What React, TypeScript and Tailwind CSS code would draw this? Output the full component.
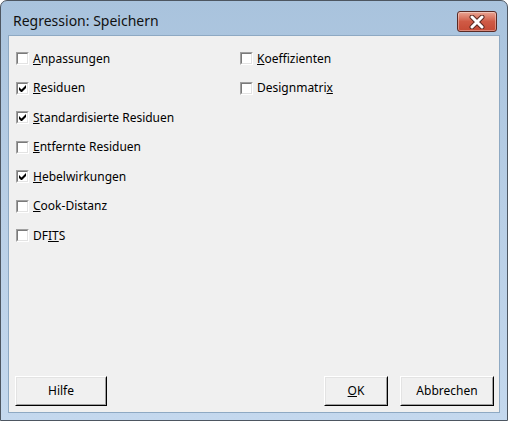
import React from "react";

type Option = { label: React.ReactNode; checked: boolean };

const left: Option[] = [
  { label: <><u>A</u>npassungen</>, checked: false },
  { label: <><u>R</u>esiduen</>, checked: true },
  { label: <><u>S</u>tandardisierte Residuen</>, checked: true },
  { label: <><u>E</u>ntfernte Residuen</>, checked: false },
  { label: <><u>H</u>ebelwirkungen</>, checked: true },
  { label: <><u>C</u>ook-Distanz</>, checked: false },
  { label: <>DF<u>IT</u>S</>, checked: false },
];

const right: Option[] = [
  { label: <><u>K</u>oeffizienten</>, checked: false },
  { label: <>Designmatri<u>x</u></>, checked: false },
];

function CheckBox({ checked }: { checked: boolean }) {
  return (
    <div className="w-[13px] h-[13px] shrink-0 border border-t-[#a0a0a0] border-l-[#a0a0a0] border-r-white border-b-white">
      <div className="w-full h-full border border-t-[#7a7a7a] border-l-[#7a7a7a] border-r-[#e3e3e3] border-b-[#e3e3e3] bg-white flex items-center justify-center">
        {checked && (
          <svg width="7" height="7" viewBox="0 0 7 7">
            <path d="M0 2v3l2 2h1l4-4V0L2.5 4.5z" fill="#000" />
          </svg>
        )}
      </div>
    </div>
  );
}

function Row({ opt }: { opt: Option }) {
  return (
    <div className="h-[29.5px] flex items-center gap-[4px]">
      <CheckBox checked={opt.checked} />
      <span className="leading-none">{opt.label}</span>
    </div>
  );
}

function Button({ children, className }: { children: React.ReactNode; className: string }) {
  return (
    <div className={`h-[30px] border border-t-white border-l-white border-r-black border-b-black ${className}`}>
      <div className="w-full h-full border border-t-[#e3e3e3] border-l-[#e3e3e3] border-r-[#a0a0a0] border-b-[#a0a0a0] bg-[#f0f0f0] flex items-center justify-center">
        {children}
      </div>
    </div>
  );
}

function CloseButton() {
  return (
    <div className="w-[40px] h-[21px] rounded-[3px] border border-[#5a2a24] bg-gradient-to-b from-[#e8a493] via-[#cf5a45] to-[#c54a35] flex items-center justify-center shadow-[inset_0_0_0_1px_rgba(255,255,255,0.35)]">
      <svg width="16" height="14" viewBox="0 0 16 14">
        <path d="M3 2l10 10M13 2L3 12" stroke="#5b2a22" strokeWidth="5" strokeLinecap="round" />
        <path d="M3 2l10 10M13 2L3 12" stroke="#fff" strokeWidth="3" strokeLinecap="round" />
      </svg>
    </div>
  );
}

export default function App() {
  return (
    <div className="w-[508px] h-[421px] bg-white">
      <div
        className="w-full h-full rounded-t-[7px] border border-[#4d5661] bg-gradient-to-b from-[#a9c3dd] via-[#b9cfe6] to-[#c4d8ee] flex flex-col px-[7px] pb-[7px]"
        style={{ fontFamily: '"Noto Sans", "Open Sans", sans-serif' }}
      >
        <div className="h-[34px] flex items-start justify-between shrink-0">
          <div className="pt-[11px] pl-[5px] text-[14px] leading-[18px] text-[#111]">Regression: Speichern</div>
          <div className="pt-[10px] pr-[3px]">
            <CloseButton />
          </div>
        </div>
        <div className="flex-1 bg-[#f0f0f0] border border-[#8ea9c3] flex flex-col text-[12px] text-black">
          <div className="flex pt-[8px] pl-[7px]">
            <div className="w-[224px] flex flex-col">
              {left.map((o, i) => (
                <Row key={i} opt={o} />
              ))}
            </div>
            <div className="flex flex-col">
              {right.map((o, i) => (
                <Row key={i} opt={o} />
              ))}
            </div>
          </div>
          <div className="flex-1" />
          <div className="flex items-center pl-[6px] pr-[5px] pb-[6px]">
            <Button className="w-[92px]">Hilfe</Button>
            <div className="flex-1" />
            <Button className="w-[64px]">
              <span><u>O</u>K</span>
            </Button>
            <div className="w-[12px]" />
            <Button className="w-[94px]">Abbrechen</Button>
          </div>
        </div>
      </div>
    </div>
  );
}
